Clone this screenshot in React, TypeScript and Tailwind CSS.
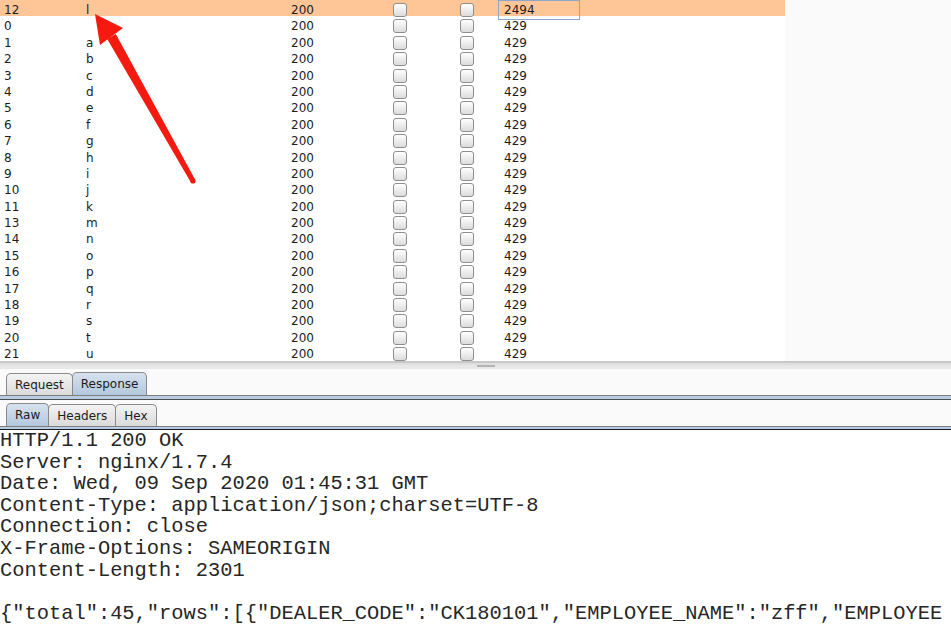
import React from "react";

const rows = [
  { n: "12", p: "l", len: "2494", sel: true },
  { n: "0", p: "", len: "429" },
  { n: "1", p: "a", len: "429" },
  { n: "2", p: "b", len: "429" },
  { n: "3", p: "c", len: "429" },
  { n: "4", p: "d", len: "429" },
  { n: "5", p: "e", len: "429" },
  { n: "6", p: "f", len: "429" },
  { n: "7", p: "g", len: "429" },
  { n: "8", p: "h", len: "429" },
  { n: "9", p: "i", len: "429" },
  { n: "10", p: "j", len: "429" },
  { n: "11", p: "k", len: "429" },
  { n: "13", p: "m", len: "429" },
  { n: "14", p: "n", len: "429" },
  { n: "15", p: "o", len: "429" },
  { n: "16", p: "p", len: "429" },
  { n: "17", p: "q", len: "429" },
  { n: "18", p: "r", len: "429" },
  { n: "19", p: "s", len: "429" },
  { n: "20", p: "t", len: "429" },
  { n: "21", p: "u", len: "429" },
];

const response = [
  "HTTP/1.1 200 OK",
  "Server: nginx/1.7.4",
  "Date: Wed, 09 Sep 2020 01:45:31 GMT",
  "Content-Type: application/json;charset=UTF-8",
  "Connection: close",
  "X-Frame-Options: SAMEORIGIN",
  "Content-Length: 2301",
  "",
  '{"total":45,"rows":[{"DEALER_CODE":"CK180101","EMPLOYEE_NAME":"zff","EMPLOYEE',
];

function Check() {
  return (
    <div className="w-[14px] h-[14px] rounded-[3px] border border-[#8e8e8e] bg-linear-to-b from-white to-[#dcdcdc]" />
  );
}

function Tab({ label, active }: { label: string; active?: boolean }) {
  return (
    <div
      className={`flex items-center justify-center px-[8px] border border-b-0 border-[#8a8a8a] rounded-t-[5px] -ml-px first:ml-0 ${
        active
          ? "h-[23px] bg-linear-to-b from-[#d6e2ef] to-[#b3c8de]"
          : "h-[22px] bg-linear-to-b from-[#f4f4f4] to-[#dadada]"
      }`}
    >
      {label}
    </div>
  );
}

export default function App() {
  return (
    <div
      className="w-[951px] h-[627px] overflow-hidden bg-white text-[#1c1c1c]"
      style={{ fontFamily: '"DejaVu Sans", sans-serif' }}
    >
      {/* results table */}
      <div className="h-[361px] flex overflow-hidden text-[12px]">
        <div className="w-[785px] bg-white relative">
          {rows.map((r) => (
            <div
              key={r.n}
              className={`grid grid-cols-[82px_205px_102px_67px_42px_82px_1fr] h-[16.4px] items-center ${
                r.sel ? "bg-[#fec597]" : ""
              }`}
            >
              <div className="pl-[4px]">{r.n}</div>
              <div className="pl-[4px]">{r.p}</div>
              <div className="pl-[4px]">200</div>
              <div className="pl-[4px]">
                <Check />
              </div>
              <div className="pl-[4px]">
                <Check />
              </div>
              <div
                className={`h-full flex items-center pl-[5px] ${
                  r.sel ? "border border-[#8aa6c9]" : "border border-transparent"
                }`}
              >
                {r.len}
              </div>
              <div />
            </div>
          ))}
          {/* next row, only its checkboxes peek out */}
          <div className="grid grid-cols-[82px_205px_102px_67px_42px_82px_1fr] h-[16.4px] items-center">
            <div />
            <div />
            <div />
            <div className="pl-[4px]">
              <Check />
            </div>
            <div className="pl-[4px]">
              <Check />
            </div>
          </div>
          <svg
            className="absolute inset-0 pointer-events-none"
            width="785"
            height="361"
          >
            <polygon points="95,14 100,45 123,28" fill="#f41a0f" />
            <polygon
              points="115.8,34 195.2,179.7 190.8,182.3 107.2,39"
              fill="#f41a0f"
            />
            <circle cx="193" cy="181" r="2.6" fill="#f41a0f" />
          </svg>
        </div>
        <div className="flex-1 bg-[#fafafa]" />
      </div>

      {/* split divider */}
      <div className="h-[2px] bg-[#c8c8c8]" />
      <div className="h-[2px] bg-[#dedede]" />
      <div className="h-[4px] bg-[#e7e7ea] relative">
        <div className="absolute left-[477px] top-0 w-[18px] h-[2px] bg-[#b4b4b4]" />
      </div>

      <div className="bg-[#fafafa]">
        {/* Request / Response tabs */}
        <div className="h-[26px] pl-[6px] pt-[3px] flex items-end text-[12px]">
          <Tab label="Request" />
          <Tab label="Response" active />
        </div>
        <div className="h-px bg-[#7e7e7e]" />
        <div className="h-[3px] bg-[#b9cde2]" />
        <div className="h-px bg-[#4c4c4c]" />

        {/* Raw / Headers / Hex tabs */}
        <div className="h-[26px] pl-[6px] pt-[2px] flex items-end text-[12px]">
          <Tab label="Raw" active />
          <Tab label="Headers" />
          <Tab label="Hex" />
        </div>
        <div className="h-px bg-[#7e7e7e]" />
        <div className="h-[2px] bg-[#b9cde2]" />
        <div className="h-px bg-[#1a1a24]" />
      </div>

      {/* response body */}
      <div
        className="bg-white text-[#262626] text-[20.4px] leading-[21.6px] whitespace-pre overflow-hidden"
        style={{ fontFamily: '"Liberation Mono", "Courier New", monospace' }}
      >
        {response.map((l, i) => (
          <div key={i} className="h-[21.6px]">
            {l}
          </div>
        ))}
      </div>
    </div>
  );
}
